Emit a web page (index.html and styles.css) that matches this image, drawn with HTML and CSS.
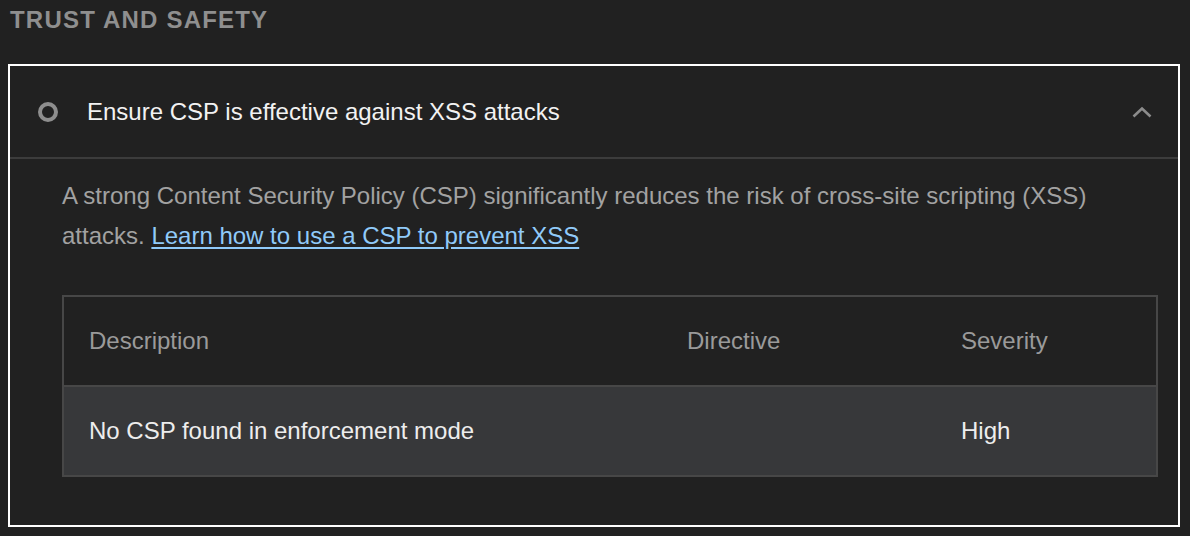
FILE: index.html
```html
<!DOCTYPE html>
<html lang="en">
<head>
<meta charset="utf-8">
<title>Trust and Safety</title>
<link rel="stylesheet" href="styles.css">
</head>
<body>
<h2 class="group-title">TRUST AND SAFETY</h2>
<section class="audit">
  <div class="audit-header">
    <span class="status-icon"></span>
    <span class="audit-title">Ensure CSP is effective against XSS attacks</span>
    <svg class="chevron" width="20" height="12" viewBox="0 0 20 12" aria-hidden="true">
      <path d="M1.5 10.5 L10 2.5 L18.5 10.5" fill="none" stroke="#8c8c8c" stroke-width="2.6"/>
    </svg>
  </div>
  <div class="audit-body">
    <p class="audit-desc">A strong Content Security Policy (CSP) significantly reduces the risk of cross-site scripting (XSS) attacks. <a href="#" class="link">Learn how to use a CSP to prevent XSS</a></p>
    <div class="table">
      <div class="row head">
        <div class="cell">Description</div>
        <div class="cell">Directive</div>
        <div class="cell">Severity</div>
      </div>
      <div class="row body-row">
        <div class="cell">No CSP found in enforcement mode</div>
        <div class="cell"></div>
        <div class="cell">High</div>
      </div>
    </div>
  </div>
</section>
</body>
</html>
```
FILE: styles.css
```css
html, body {
  margin: 0;
  padding: 0;
  background: #212121;
  font-family: "Liberation Sans", Arial, Helvetica, sans-serif;
}

.group-title {
  margin: 0 0 24px 0;
  padding-left: 10px;
  height: 40px;
  line-height: 40px;
  font-size: 24px;
  font-weight: bold;
  letter-spacing: 1.2px;
  color: #8f8f8f;
}

.audit {
  margin-left: 8px;
  width: 1172px;
  height: 463px;
  box-sizing: border-box;
  border: 2px solid #ffffff;
}

.audit-header {
  display: flex;
  align-items: center;
  height: 91px;
  border-bottom: 2px solid #3c3c3c;
  padding-left: 28px;
  padding-right: 26px;
}

.status-icon {
  width: 20px;
  height: 20px;
  box-sizing: border-box;
  border: 4px solid #8e8e8e;
  border-radius: 50%;
  flex: none;
}

.audit-title {
  margin-left: 29px;
  flex: 1;
  font-size: 24px;
  color: #f2f2f2;
}

.chevron {
  flex: none;
  display: block;
}

.audit-body {
  padding: 17px 20px 0 52px;
}

.audit-desc {
  margin: 0;
  font-size: 24px;
  line-height: 40px;
  color: #a2a2a2;
}

.link {
  color: #90caf9;
  text-decoration: underline;
  text-underline-offset: 3px;
}

.table {
  margin-top: 39px;
  width: 1096px;
  box-sizing: border-box;
  border: 2px solid #474747;
}

.row {
  display: grid;
  grid-template-columns: 598px 274px 1fr;
  height: 88px;
  align-items: center;
  font-size: 24px;
}

.row .cell {
  padding-left: 25px;
}

.head {
  color: #9a9a9a;
  border-bottom: 2px solid #474747;
}

.body-row {
  background: #37383a;
  color: #ededed;
}
```
